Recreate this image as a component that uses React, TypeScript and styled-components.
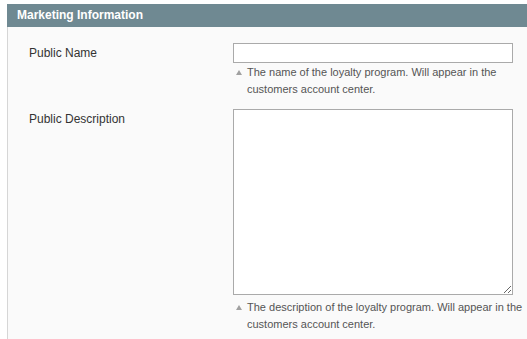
import React from "react";
import styled, { createGlobalStyle } from "styled-components";

const GlobalStyle = createGlobalStyle`
  body {
    margin: 0;
    background: #ffffff;
    font-family: "Liberation Sans", Arial, sans-serif;
  }
`;

const Wrapper = styled.div`
  padding: 4px 0 0 7px;
  width: 520px;
`;

const Header = styled.div`
  height: 23px;
  background-color: #6f8992;
  color: #ffffff;
  font-size: 12px;
  font-weight: bold;
  line-height: 23px;
  padding-left: 10px;
`;

const Fieldset = styled.div`
  background-color: #fafafa;
  border-left: 1px solid #d6d6d6;
  padding: 16px 0 10px 21px;
  height: 320px;
  box-sizing: border-box;
`;

const Row = styled.div`
  display: grid;
  grid-template-columns: 204px 292px;
  margin-bottom: 11px;
`;

const Label = styled.label`
  font-size: 12px;
  color: #333333;
  padding-top: 2px;
  line-height: 16px;
`;

const Value = styled.div`
  display: flex;
  flex-direction: column;
`;

const Input = styled.input`
  box-sizing: border-box;
  width: 280px;
  height: 20px;
  border: 1px solid #aaaaaa;
  background: #ffffff;
  margin: 0;
  padding: 2px;
`;

const TextArea = styled.textarea`
  box-sizing: border-box;
  width: 280px;
  height: 186px;
  border: 1px solid #aaaaaa;
  background: #ffffff;
  margin: 0;
  padding: 2px;
  resize: vertical;
  display: block;
`;

const Note = styled.p<{ $gap: number }>`
  margin: ${(p) => p.$gap}px 0 0;
  padding-left: 14px;
  position: relative;
  font-size: 11px;
  line-height: 17px;
  color: #555555;

  &::before {
    content: "";
    position: absolute;
    left: 3px;
    top: 6px;
    border-left: 3px solid transparent;
    border-right: 3px solid transparent;
    border-bottom: 5px solid #a0a0a0;
  }
`;

function App() {
  return (
    <Wrapper>
      <GlobalStyle />
      <Header>Marketing Information</Header>
      <Fieldset>
        <Row>
          <Label>Public Name</Label>
          <Value>
            <Input type="text" />
            <Note $gap={1}>
              The name of the loyalty program. Will appear in the customers
              account center.
            </Note>
          </Value>
        </Row>
        <Row>
          <Label>Public Description</Label>
          <Value>
            <TextArea />
            <Note $gap={4}>
              The description of the loyalty program. Will appear in the
              customers account center.
            </Note>
          </Value>
        </Row>
      </Fieldset>
    </Wrapper>
  );
}

export default App;
